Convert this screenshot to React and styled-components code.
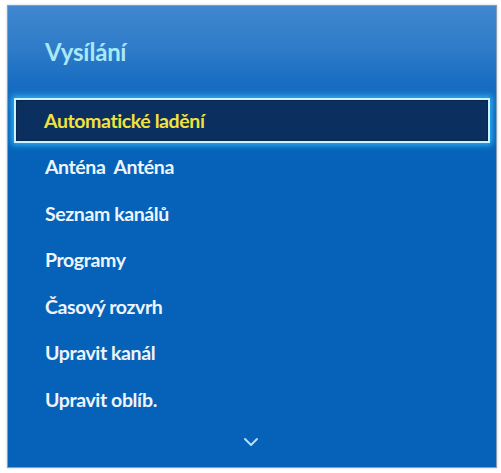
import React from "react";
import styled, { createGlobalStyle } from "styled-components";

const Global = createGlobalStyle`
  html, body { margin: 0; padding: 0; background: #ffffff; }
  body { font-family: "Lato", "Open Sans", sans-serif; }
`;

const Page = styled.div`
  width: 501px;
  height: 473px;
  padding: 5px 4px 5px 7px;
  box-sizing: border-box;
  background: #ffffff;
`;

const Panel = styled.div`
  width: 490px;
  height: 463px;
  box-sizing: border-box;
  border: 1px solid #8f9fb3;
  box-shadow: 0 0 2px rgba(120, 140, 170, 0.5);
  background: linear-gradient(
    180deg,
    #4087cf 0px,
    #307cc9 40px,
    #1a6ec2 75px,
    #0a66bd 110px,
    #0562b8 160px,
    #0562b8 100%
  );
  display: flex;
  flex-direction: column;
`;

const Title = styled.h1`
  margin: 0;
  height: 91px;
  padding: 31px 0 0 37px;
  box-sizing: border-box;
  font-family: "Lato", sans-serif;
  font-weight: 700;
  font-size: 24px;
  color: #a9e8f6;
  letter-spacing: -0.3px;
`;

const List = styled.ul`
  list-style: none;
  margin: 0;
  padding: 0 6px 0 6px;
  display: flex;
  flex-direction: column;
`;

const Item = styled.li`
  height: ${(p) => (p.$active ? "45px" : "46.5px")};
  margin: ${(p) => (p.$active ? "1px 0 0.5px 0" : "0")};
  display: flex;
  align-items: center;
  box-sizing: border-box;
  padding-left: ${(p) => (p.$active ? "28px" : "31px")};
  font-family: "Lato", sans-serif;
  font-weight: 700;
  font-size: 19.5px;
  letter-spacing: -0.4px;
  white-space: pre;
  color: ${(p) => (p.$active ? "#f2e23c" : "#eef4fb")};
  background: ${(p) => (p.$active ? "#0b2f5f" : "transparent")};
  border: ${(p) => (p.$active ? "2px solid #c9f3ff" : "none")};
  box-shadow: ${(p) =>
    p.$active
      ? "0 0 6px 2px rgba(60, 200, 255, 0.8), inset 0 0 2px rgba(0,0,0,0.6)"
      : "none"};
`;

const More = styled.div`
  display: flex;
  justify-content: center;
  margin-top: 14px;
  padding-right: 3px;
`;

const items = [
  "Automatické ladění",
  "Anténa  Anténa",
  "Seznam kanálů",
  "Programy",
  "Časový rozvrh",
  "Upravit kanál",
  "Upravit oblíb.",
];

export default function App() {
  return (
    <>
      <Global />
      <Page>
        <Panel>
          <Title>Vysílání</Title>
          <List>
            {items.map((t, i) => (
              <Item key={i} $active={i === 0}>
                {t}
              </Item>
            ))}
          </List>
          <More>
            <svg width="16" height="10" viewBox="0 0 16 10">
              <polyline
                points="2,2 8,8 14,2"
                fill="none"
                stroke="#b9dcf5"
                strokeWidth="2"
                strokeLinecap="round"
                strokeLinejoin="round"
              />
            </svg>
          </More>
        </Panel>
      </Page>
    </>
  );
}
